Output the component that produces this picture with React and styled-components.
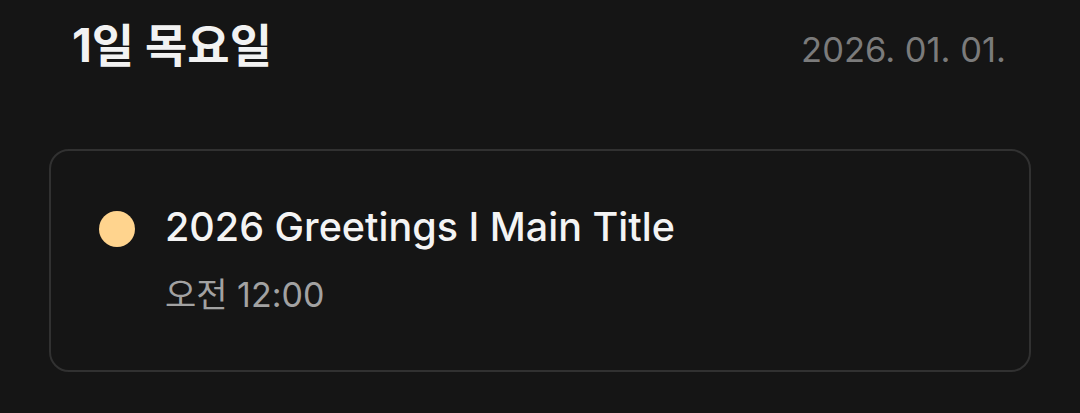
import React from "react";
import styled, { createGlobalStyle } from "styled-components";

const Global = createGlobalStyle`
  html, body { margin: 0; padding: 0; background: #151515; }
  body { font-family: Inter, "Noto Sans CJK KR", sans-serif; -webkit-font-smoothing: antialiased; }
`;

const Page = styled.div`
  width: 1080px;
  height: 413px;
  box-sizing: border-box;
  padding: 0 49px;
  background: #151515;
  display: flex;
  flex-direction: column;
`;

const Header = styled.div`
  display: flex;
  align-items: baseline;
  justify-content: space-between;
  padding: 17px 25px 0 23px;
  height: 149px;
  box-sizing: border-box;
`;

const DayTitle = styled.h2`
  margin: 0;
  font-family: Inter, "Noto Sans CJK KR", sans-serif;
  font-weight: 700;
  font-size: 46px;
  line-height: 56px;
  color: #f2f2f2;
`;

const DateText = styled.span`
  font-size: 34.5px;
  line-height: 56px;
  color: #7b7b7b;
  font-weight: 400;
`;

const Card = styled.div`
  border: 2px solid #313131;
  border-radius: 20px;
  height: 223px;
  box-sizing: border-box;
  display: flex;
  align-items: flex-start;
  padding: 52px 48px 0 48px;
  gap: 30px;
`;

const Dot = styled.span`
  flex: none;
  width: 36px;
  height: 36px;
  border-radius: 50%;
  background: ${(p) => p.$color};
  margin-top: 8px;
`;

const Info = styled.div`
  display: flex;
  flex-direction: column;
  gap: 24px;
`;

const EventTitle = styled.div`
  font-size: 39.5px;
  line-height: 48px;
  font-weight: 500;
  color: #f4f4f4;
`;

const EventTime = styled.div`
  font-size: 34px;
  line-height: 40px;
  color: #a2a2a2;
`;

export default function App() {
  return (
    <Page>
      <Global />
      <Header>
        <DayTitle>1일 목요일</DayTitle>
        <DateText>2026. 01. 01.</DateText>
      </Header>
      <Card>
        <Dot $color="#FFD48E" />
        <Info>
          <EventTitle>2026 Greetings I Main Title</EventTitle>
          <EventTime>오전 12:00</EventTime>
        </Info>
      </Card>
    </Page>
  );
}
